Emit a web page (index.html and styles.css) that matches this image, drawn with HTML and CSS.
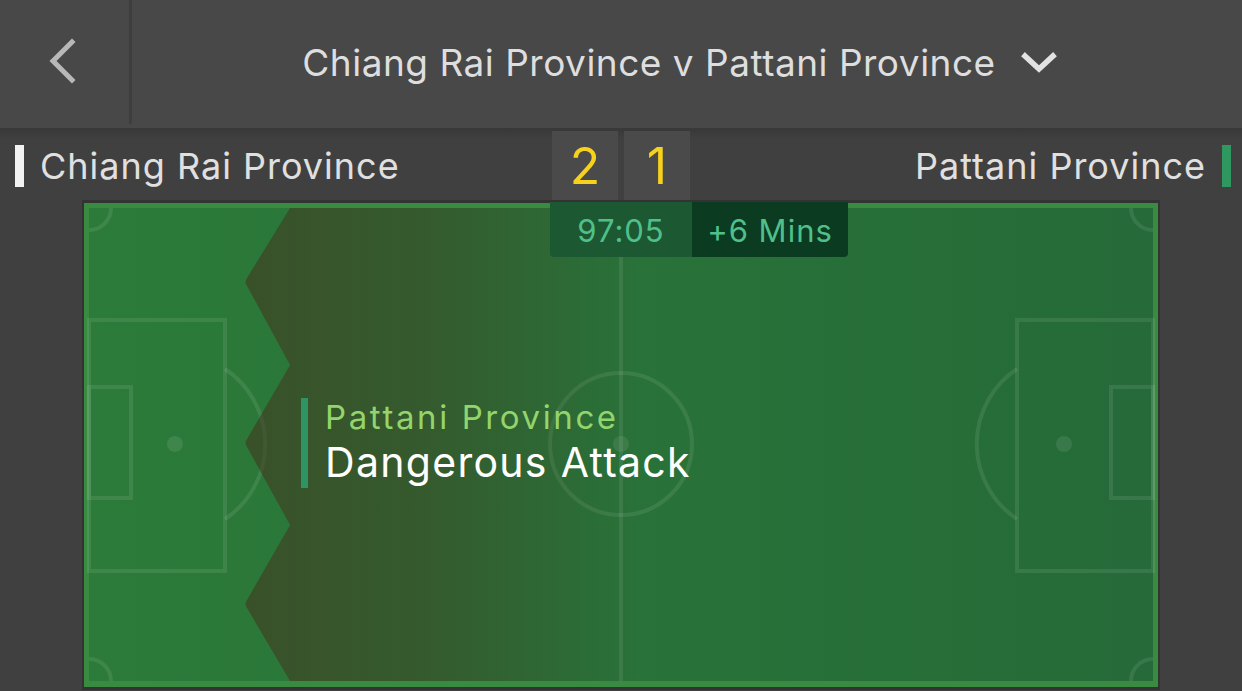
FILE: index.html
```html
<!DOCTYPE html>
<html>
<head>
<meta charset="utf-8">
<link rel="stylesheet" href="styles.css">
</head>
<body>
<header class="topbar">
  <div class="back">
    <svg width="30" height="50" viewBox="0 0 30 50"><polyline points="24,5 5,24 24,43" fill="none" stroke="#b8b8b8" stroke-width="5" stroke-linecap="square"/></svg>
  </div>
  <div class="title">
    <span class="title-text">Chiang Rai Province v Pattani Province</span>
    <svg class="caret" width="38" height="24" viewBox="0 0 38 24"><polyline points="5,5 19,18 33,5" fill="none" stroke="#e2e2e2" stroke-width="5.5" stroke-linecap="square"/></svg>
  </div>
</header>
<section class="teams">
  <div class="team home"><span class="bar white"></span><span>Chiang Rai Province</span></div>
  <div class="score"><div class="digit">2</div><div class="digit">1</div></div>
  <div class="team away"><span>Pattani Province</span><span class="bar green"></span></div>
</section>
<section class="pitch">
  <svg class="field" width="1078" height="490" viewBox="0 0 1078 490">
    <defs>
      <linearGradient id="grass" x1="0" y1="0" x2="1" y2="0">
        <stop offset="0" stop-color="#2c7b3a"/>
        <stop offset="1" stop-color="#256a38"/>
      </linearGradient>
      <linearGradient id="shade" gradientUnits="userSpaceOnUse" x1="163" y1="0" x2="560" y2="0">
        <stop offset="0" stop-color="#45301c" stop-opacity="0.55"/>
        <stop offset="0.45" stop-color="#45301c" stop-opacity="0.4"/>
        <stop offset="1" stop-color="#45301c" stop-opacity="0"/>
      </linearGradient>
    </defs>
    <rect x="0" y="0" width="1078" height="490" fill="#333333"/>
    <rect x="2" y="3" width="1074" height="484" fill="#3a8b42"/>
    <rect x="7" y="8" width="1064" height="473" fill="url(#grass)"/>
    <g fill="none" stroke="#ffffff" stroke-opacity="0.09" stroke-width="4">
      <line x1="539" y1="8" x2="539" y2="481"/>
      <circle cx="539" cy="244" r="71"/>
      <rect x="7" y="120" width="136" height="251"/>
      <rect x="7" y="187" width="42" height="111"/>
      <path d="M143 169 A 90 90 0 0 1 143 319"/>
      <rect x="935" y="120" width="136" height="251"/>
      <rect x="1029" y="187" width="42" height="111"/>
      <path d="M935 169 A 90 90 0 0 0 935 319"/>
      <path d="M7 30 A 22 22 0 0 0 29 8"/>
      <path d="M7 459 A 22 22 0 0 1 29 481"/>
      <path d="M1071 30 A 22 22 0 0 1 1049 8"/>
      <path d="M1071 459 A 22 22 0 0 0 1049 481"/>
    </g>
    <g fill="#ffffff" fill-opacity="0.09">
      <circle cx="539" cy="244" r="8"/>
      <circle cx="93" cy="244" r="8"/>
      <circle cx="982" cy="244" r="8"/>
    </g>
    <path d="M208 8 L165 78 Q162 82 165 86 L208 165 L165 239 Q162 243 165 247 L208 325 L165 400 Q162 404 165 408 L208 481 L1071 481 L1071 8 Z" fill="url(#shade)"/>
  </svg>
  <div class="clock">
    <div class="time">97:05</div>
    <div class="extra">+6 Mins</div>
  </div>
  <div class="event">
    <span class="event-bar"></span>
    <div class="event-text">
      <div class="event-team">Pattani Province</div>
      <div class="event-name">Dangerous Attack</div>
    </div>
  </div>
</section>
</body>
</html>
```
FILE: styles.css
```css
* { box-sizing: border-box; }
html, body {
  margin: 0;
  padding: 0;
  background: #404040;
  font-family: Inter, "Noto Sans", sans-serif;
  overflow: hidden;
}
.topbar {
  height: 131px;
  display: flex;
  background: #484848;
  border-bottom: 3px solid #393939;
}
.back {
  width: 132px;
  height: 124px;
  border-right: 3px solid #3e3e3e;
  display: flex;
  align-items: center;
  justify-content: center;
  padding-right: 4px;
}
.title {
  flex: 1;
  display: flex;
  align-items: center;
  justify-content: center;
  gap: 24px;
  padding-right: 14px;
  padding-bottom: 4px;
}
.title-text {
  color: #dedede;
  font-size: 37px;
  letter-spacing: 0.5px;
}
.caret { margin-top: 2px; }
.teams {
  height: 69px;
  display: flex;
  align-items: center;
  justify-content: space-between;
  position: relative;
  background: linear-gradient(#3a3a3a 0, #404040 8px);
}
.team {
  display: flex;
  align-items: center;
  color: #e0e0e0;
  font-size: 36px;
  letter-spacing: 1px;
  gap: 16px;
}
.home { padding-left: 15px; }
.away { padding-right: 11px; gap: 16px; }
.bar { width: 9px; height: 42px; display: block; }
.bar.white { background: #f2f2f2; }
.bar.green { background: #2f9760; }
.score {
  position: absolute;
  left: 552px;
  top: 0;
  display: flex;
  gap: 6px;
}
.digit {
  width: 66px;
  height: 69px;
  background: #4a4a4a;
  color: #f6d21c;
  font-size: 50px;
  display: flex;
  align-items: center;
  justify-content: center;
}
.pitch {
  position: relative;
  margin-left: 82px;
  width: 1078px;
  height: 490px;
}
.field { display: block; }
.clock {
  position: absolute;
  left: 468px;
  top: 2px;
  display: flex;
  height: 55px;
  border-radius: 0 0 4px 4px;
  overflow: hidden;
  font-size: 31px;
  letter-spacing: 1px;
  color: #4fc08c;
}
.time {
  width: 142px;
  background: #1c5832;
  display: flex;
  align-items: center;
  justify-content: center;
  padding-top: 2px;
}
.extra {
  width: 156px;
  background: #0b3b21;
  display: flex;
  align-items: center;
  justify-content: center;
  padding-top: 2px;
}
.event {
  position: absolute;
  left: 219px;
  top: 198px;
  display: flex;
  gap: 17px;
}
.event-bar {
  width: 7px;
  height: 90px;
  background: #2e9463;
}
.event-team {
  color: #93d46b;
  font-size: 33px;
  letter-spacing: 2.6px;
  line-height: 40px;
  margin-top: -1px;
}
.event-name {
  color: #ffffff;
  font-size: 41px;
  letter-spacing: 1.3px;
  line-height: 50px;
}
```
